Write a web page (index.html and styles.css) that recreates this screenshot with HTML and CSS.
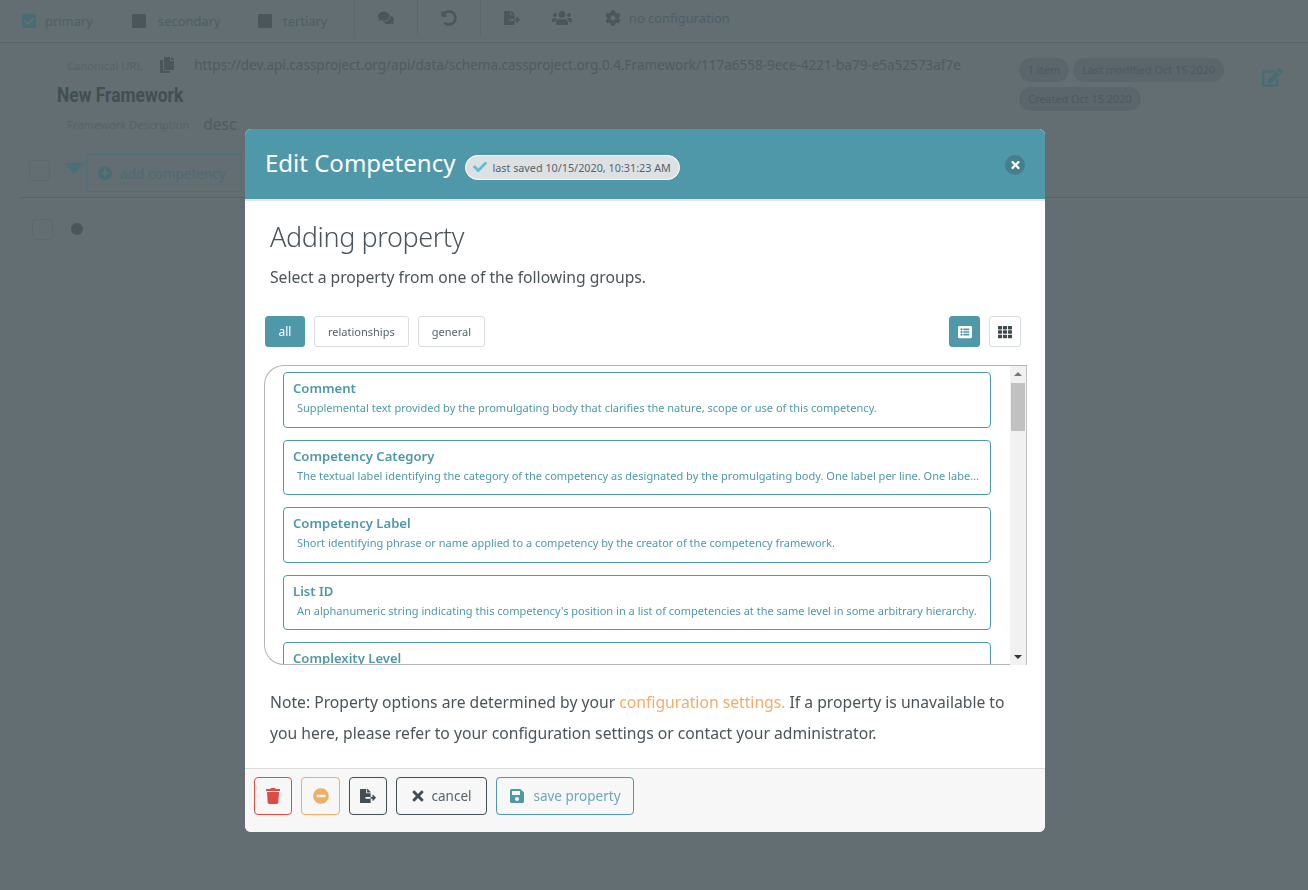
FILE: index.html
```html
<!DOCTYPE html>
<html lang="en">
<head>
    <meta charset="UTF-8">
    <title>Edit Competency</title>
    <link rel="stylesheet" href="styles.css">
</head>
<body>
    <svg class="defs" xmlns="http://www.w3.org/2000/svg">
        <symbol id="i-check-square" viewBox="0 0 448 512"><path d="M400 480H48c-26.51 0-48-21.49-48-48V80c0-26.51 21.49-48 48-48h352c26.51 0 48 21.49 48 48v352c0 26.51-21.49 48-48 48zm-204.686-98.059l184-184c6.248-6.248 6.248-16.379 0-22.627l-22.627-22.627c-6.248-6.248-16.379-6.249-22.628 0L184 302.745l-69.059-69.059c-6.248-6.248-16.379-6.248-22.628 0L69.686 256.313c-6.248 6.248-6.248 16.379 0 22.627l104 104c6.249 6.25 16.379 6.25 22.628.001z"/></symbol>
        <symbol id="i-square" viewBox="0 0 448 512"><path d="M400 32H48C21.5 32 0 53.5 0 80v352c0 26.5 21.5 48 48 48h352c26.5 0 48-21.5 48-48V80c0-26.5-21.5-48-48-48z"/></symbol>
        <symbol id="i-comments" viewBox="0 0 576 512"><path d="M416 192c0-88.4-93.1-160-208-160S0 103.6 0 192c0 34.3 14.1 65.9 38 92-13.4 30.2-35.5 54.2-35.8 54.5-2.2 2.3-2.8 5.7-1.5 8.7S4.8 352 8 352c36.6 0 66.9-12.3 88.7-25 32.2 15.7 70.3 25 111.3 25 114.9 0 208-71.6 208-160zm122 220c23.9-26 38-57.7 38-92 0-66.9-53.5-124.2-129.3-148.1.9 6.6 1.3 13.3 1.3 20.1 0 105.9-107.7 192-240 192-10.8 0-21.3-.8-31.7-1.9C207.8 439.6 281.8 480 368 480c41 0 79.1-9.2 111.3-25 21.8 12.7 52.1 25 88.7 25 3.2 0 6.1-1.9 7.3-4.8 1.3-2.9.7-6.3-1.5-8.7-.3-.3-22.4-24.2-35.8-54.5z"/></symbol>
        <symbol id="i-undo" viewBox="0 0 512 512"><path d="M255.545 8c-66.269.119-126.438 26.233-170.86 68.685L48.971 40.971C33.851 25.851 8 36.559 8 57.941V192c0 13.255 10.745 24 24 24h134.059c21.382 0 32.09-25.851 16.971-40.971l-41.75-41.75c30.864-28.899 70.801-44.907 113.23-45.273 92.398-.798 170.283 73.977 169.484 169.442C423.236 348.009 349.816 424 256 424c-41.127 0-79.997-14.678-110.63-41.556-4.743-4.161-11.906-3.908-16.368.553L89.34 422.659c-4.872 4.872-4.631 12.815.482 17.433C133.798 479.813 192.074 504 256 504c136.966 0 247.999-111.033 248-247.998C504.001 119.193 392.354 7.755 255.545 8z"/></symbol>
        <symbol id="i-export" viewBox="0 0 576 512"><path d="M384 121.9c0-6.3-2.5-12.4-7-16.9L279.1 7c-4.5-4.5-10.6-7-17-7H256v128h128zM571 308l-95.7-96.4c-10.1-10.1-27.4-3-27.4 11.3V288h-64v64h64v65.2c0 14.3 17.3 21.4 27.4 11.3L571 332c6.6-6.6 6.6-17.4 0-24zm-379 28v-32c0-8.8 7.2-16 16-16h176V160H248c-13.2 0-24-10.8-24-24V0H24C10.7 0 0 10.7 0 24v464c0 13.3 10.7 24 24 24h336c13.3 0 24-10.7 24-24V352H208c-8.8 0-16-7.2-16-16z"/></symbol>
        <symbol id="i-users" viewBox="0 0 640 512"><path d="M96 224c35.3 0 64-28.7 64-64s-28.7-64-64-64-64 28.7-64 64 28.7 64 64 64zm448 0c35.3 0 64-28.7 64-64s-28.7-64-64-64-64 28.7-64 64 28.7 64 64 64zm32 32h-64c-17.6 0-33.5 7.1-45.1 18.6 40.3 22.1 68.9 62 75.1 109.4h66c17.7 0 32-14.3 32-32v-32c0-35.3-28.7-64-64-64zm-256 0c61.9 0 112-50.1 112-112S381.9 32 320 32 208 82.1 208 144s50.1 112 112 112zm76.8 32h-8.3c-20.8 10-43.9 16-68.5 16s-47.6-6-68.5-16h-8.3C179.6 288 128 339.6 128 403.2V432c0 26.5 21.5 48 48 48h288c26.5 0 48-21.5 48-48v-28.8c0-63.6-51.6-115.2-115.2-115.2zm-223.7-13.4C161.5 263.1 145.6 256 128 256H64c-35.3 0-64 28.7-64 64v32c0 17.7 14.3 32 32 32h65.9c6.3-47.4 34.9-87.3 75.2-109.4z"/></symbol>
        <symbol id="i-cog" viewBox="0 0 512 512"><path d="M487.4 315.7l-42.6-24.6c4.3-23.2 4.3-47 0-70.2l42.6-24.6c4.9-2.8 7.1-8.6 5.5-14-11.1-35.6-30-67.8-54.7-94.6-3.8-4.1-10-5.1-14.8-2.3L380.8 110c-17.9-15.4-38.5-27.3-60.8-35.1V25.8c0-5.6-3.9-10.5-9.4-11.7-36.7-8.2-74.3-7.8-109.2 0-5.5 1.2-9.4 6.1-9.4 11.7V75c-22.2 7.9-42.8 19.8-60.8 35.1L88.7 85.5c-4.9-2.8-11-1.9-14.8 2.3-24.7 26.7-43.6 58.9-54.7 94.6-1.7 5.4.6 11.2 5.5 14L67.3 221c-4.3 23.2-4.3 47 0 70.2l-42.6 24.6c-4.9 2.8-7.1 8.6-5.5 14 11.1 35.6 30 67.8 54.7 94.6 3.8 4.1 10 5.1 14.8 2.3l42.6-24.6c17.9 15.4 38.5 27.3 60.8 35.1v49.2c0 5.6 3.9 10.5 9.4 11.7 36.7 8.2 74.3 7.8 109.2 0 5.5-1.2 9.4-6.1 9.4-11.7v-49.2c22.2-7.9 42.8-19.8 60.8-35.1l42.6 24.6c4.9 2.8 11 1.9 14.8-2.3 24.7-26.7 43.6-58.9 54.7-94.6 1.5-5.5-.7-11.3-5.6-14.1zM256 336c-44.1 0-80-35.9-80-80s35.9-80 80-80 80 35.9 80 80-35.9 80-80 80z"/></symbol>
        <symbol id="i-copy" viewBox="0 0 448 512"><path d="M320 448v40c0 13.255-10.745 24-24 24H24c-13.255 0-24-10.745-24-24V120c0-13.255 10.745-24 24-24h72v296c0 30.879 25.121 56 56 56h168zm0-344V0H152c-13.255 0-24 10.745-24 24v368c0 13.255 10.745 24 24 24h272c13.255 0 24-10.745 24-24V128H344c-13.2 0-24-10.8-24-24zm120.971-31.029L375.029 7.029A24 24 0 0 0 358.059 0H352v96h96v-6.059a24 24 0 0 0-7.029-16.97z"/></symbol>
        <symbol id="i-edit" viewBox="0 0 576 512"><path d="M402.6 83.2l90.2 90.2c3.8 3.8 3.8 10 0 13.8L274.4 405.6l-92.8 10.3c-12.4 1.4-22.9-9.1-21.5-21.5l10.3-92.8L388.8 83.2c3.8-3.8 10-3.8 13.8 0zm162-22.9l-48.8-48.8c-15.2-15.2-39.9-15.2-55.2 0l-35.4 35.4c-3.8 3.8-3.8 10 0 13.8l90.2 90.2c3.8 3.8 10 3.8 13.8 0l35.4-35.4c15.2-15.3 15.2-40 0-55.2zM384 346.2V448H64V128h229.8c3.2 0 6.2-1.3 8.5-3.5l40-40c7.6-7.6 2.2-20.5-8.5-20.5H48C21.5 64 0 85.5 0 112v352c0 26.5 21.5 48 48 48h352c26.5 0 48-21.5 48-48V306.2c0-10.7-12.9-16-20.5-8.5l-40 40c-2.2 2.3-3.5 5.3-3.5 8.5z"/></symbol>
        <symbol id="i-plus-circle" viewBox="0 0 512 512"><path d="M256 8C119 8 8 119 8 256s111 248 248 248 248-111 248-248S393 8 256 8zm144 276c0 6.6-5.4 12-12 12h-92v92c0 6.6-5.4 12-12 12h-56c-6.6 0-12-5.4-12-12v-92h-92c-6.6 0-12-5.4-12-12v-56c0-6.6 5.4-12 12-12h92v-92c0-6.6 5.4-12 12-12h56c6.6 0 12 5.4 12 12v92h92c6.6 0 12 5.4 12 12v56z"/></symbol>
        <symbol id="i-minus-circle" viewBox="0 0 512 512"><path d="M256 8C119 8 8 119 8 256s111 248 248 248 248-111 248-248S393 8 256 8zM124 296c-6.6 0-12-5.4-12-12v-56c0-6.6 5.4-12 12-12h264c6.6 0 12 5.4 12 12v56c0 6.6-5.4 12-12 12H124z"/></symbol>
        <symbol id="i-check" viewBox="0 0 512 512"><path d="M173.898 439.404l-166.4-166.4c-9.997-9.997-9.997-26.206 0-36.204l36.203-36.204c9.997-9.998 26.207-9.998 36.204 0L192 312.69 432.095 72.596c9.997-9.997 26.207-9.997 36.204 0l36.203 36.204c9.997 9.997 9.997 26.206 0 36.204l-294.4 294.401c-9.998 9.997-26.207 9.997-36.204-.001z"/></symbol>
        <symbol id="i-times" viewBox="0 0 352 512"><path d="M242.72 256l100.07-100.07c12.28-12.28 12.28-32.19 0-44.48l-22.24-22.24c-12.28-12.28-32.19-12.28-44.48 0L176 189.28 75.93 89.21c-12.28-12.28-32.19-12.28-44.48 0L9.21 111.45c-12.28 12.28-12.28 32.19 0 44.48L109.28 256 9.21 356.07c-12.28 12.28-12.28 32.19 0 44.48l22.24 22.24c12.28 12.28 32.2 12.28 44.48 0L176 322.72l100.07 100.07c12.28 12.28 32.2 12.28 44.48 0l22.24-22.24c12.28-12.28 12.28-32.19 0-44.48L242.72 256z"/></symbol>
        <symbol id="i-trash" viewBox="0 0 448 512"><path d="M432 32H312l-9.4-18.7A24 24 0 0 0 281.1 0H166.8a23.72 23.72 0 0 0-21.4 13.3L136 32H16A16 16 0 0 0 0 48v32a16 16 0 0 0 16 16h416a16 16 0 0 0 16-16V48a16 16 0 0 0-16-16zM53.2 467a48 48 0 0 0 47.9 45h245.8a48 48 0 0 0 47.9-45L416 128H32z"/></symbol>
        <symbol id="i-save" viewBox="0 0 448 512"><path d="M433.941 129.941l-83.882-83.882A48 48 0 0 0 316.118 32H48C21.49 32 0 53.49 0 80v352c0 26.51 21.49 48 48 48h352c26.51 0 48-21.49 48-48V163.882a48 48 0 0 0-14.059-33.941zM224 416c-35.346 0-64-28.654-64-64 0-35.346 28.654-64 64-64s64 28.654 64 64c0 35.346-28.654 64-64 64zm96-304.52V212c0 6.627-5.373 12-12 12H76c-6.627 0-12-5.373-12-12V108c0-6.627 5.373-12 12-12h228.52c3.183 0 6.235 1.264 8.485 3.515l3.48 3.48A11.996 11.996 0 0 1 320 111.48z"/></symbol>
        <symbol id="i-list" viewBox="0 0 512 512"><path d="M464 480H48c-26.51 0-48-21.49-48-48V80c0-26.51 21.49-48 48-48h416c26.51 0 48 21.49 48 48v352c0 26.51-21.49 48-48 48zM128 120c-22.091 0-40 17.909-40 40s17.909 40 40 40 40-17.909 40-40-17.909-40-40-40zm0 96c-22.091 0-40 17.909-40 40s17.909 40 40 40 40-17.909 40-40-17.909-40-40-40zm0 96c-22.091 0-40 17.909-40 40s17.909 40 40 40 40-17.909 40-40-17.909-40-40-40zm288-136v-32c0-6.627-5.373-12-12-12H204c-6.627 0-12 5.373-12 12v32c0 6.627 5.373 12 12 12h200c6.627 0 12-5.373 12-12zm0 96v-32c0-6.627-5.373-12-12-12H204c-6.627 0-12 5.373-12 12v32c0 6.627 5.373 12 12 12h200c6.627 0 12-5.373 12-12zm0 96v-32c0-6.627-5.373-12-12-12H204c-6.627 0-12 5.373-12 12v32c0 6.627 5.373 12 12 12h200c6.627 0 12-5.373 12-12z"/></symbol>
        <symbol id="i-th" viewBox="0 0 512 512"><path d="M149.333 56v80c0 13.255-10.745 24-24 24H24c-13.255 0-24-10.745-24-24V56c0-13.255 10.745-24 24-24h101.333c13.255 0 24 10.745 24 24zm181.334 240v-80c0-13.255-10.745-24-24-24H205.333c-13.255 0-24 10.745-24 24v80c0 13.255 10.745 24 24 24h101.333c13.256 0 24.001-10.745 24.001-24zm32-240v80c0 13.255 10.745 24 24 24H488c13.255 0 24-10.745 24-24V56c0-13.255-10.745-24-24-24H386.667c-13.255 0-24 10.745-24 24zm-32 80V56c0-13.255-10.745-24-24-24H205.333c-13.255 0-24 10.745-24 24v80c0 13.255 10.745 24 24 24h101.333c13.256 0 24.001-10.745 24.001-24zm-205.334 56H24c-13.255 0-24 10.745-24 24v80c0 13.255 10.745 24 24 24h101.333c13.255 0 24-10.745 24-24v-80c0-13.255-10.745-24-24-24zM0 376v80c0 13.255 10.745 24 24 24h101.333c13.255 0 24-10.745 24-24v-80c0-13.255-10.745-24-24-24H24c-13.255 0-24 10.745-24 24zm386.667-56H488c13.255 0 24-10.745 24-24v-80c0-13.255-10.745-24-24-24H386.667c-13.255 0-24 10.745-24 24v80c0 13.255 10.745 24 24 24zm0 160H488c13.255 0 24-10.745 24-24v-80c0-13.255-10.745-24-24-24H386.667c-13.255 0-24 10.745-24 24v80c0 13.255 10.745 24 24 24zM181.333 376v80c0 13.255 10.745 24 24 24h101.333c13.255 0 24-10.745 24-24v-80c0-13.255-10.745-24-24-24H205.333c-13.255 0-24 10.745-24 24z"/></symbol>
    </svg>

    <!-- pagina de fondo, ya atenuada -->
    <div class="page">
        <div class="topbar">
            <div class="view-item view-primary"><svg class="ico teal"><use href="#i-check-square"/></svg><span>primary</span></div>
            <div class="view-item view-secondary"><svg class="ico dark"><use href="#i-square"/></svg><span>secondary</span></div>
            <div class="view-item view-tertiary"><svg class="ico dark"><use href="#i-square"/></svg><span>tertiary</span></div>
            <div class="bar-cell bar-comments"><svg class="ico dark"><use href="#i-comments"/></svg></div>
            <div class="bar-cell bar-undo"><svg class="ico dark"><use href="#i-undo"/></svg></div>
            <div class="bar-tools">
                <svg class="ico dark tool-export"><use href="#i-export"/></svg>
                <svg class="ico dark tool-users"><use href="#i-users"/></svg>
                <svg class="ico dark tool-cog"><use href="#i-cog"/></svg>
                <span>no configuration</span>
            </div>
        </div>

        <div class="fw-head">
            <div class="fw-info">
                <div class="fw-url">
                    <span class="fw-label">Canonical URL</span>
                    <svg class="ico dark copy-ico"><use href="#i-copy"/></svg>
                    <span class="url-text">https://dev.api.cassproject.org/api/data/schema.cassproject.org.0.4.Framework/117a6558-9ece-4221-ba79-e5a52573af7e</span>
                </div>
                <div class="fw-name">New Framework</div>
                <div class="fw-desc">
                    <span class="fw-label">Framework Description</span>
                    <span class="desc-text">desc</span>
                </div>
            </div>
            <div class="fw-tags">
                <span class="tag">1 item</span>
                <span class="tag">Last modified Oct 15 2020</span>
                <span class="tag">Created Oct 15 2020</span>
            </div>
            <svg class="ico teal fw-edit"><use href="#i-edit"/></svg>
        </div>

        <div class="comp-bar">
            <span class="box"></span>
            <span class="caret"></span>
            <div class="add-btn"><svg class="ico teal"><use href="#i-plus-circle"/></svg><span>add competency</span></div>
        </div>
        <div class="comp-row">
            <span class="box"></span>
            <span class="dot"></span>
        </div>
    </div>

    <!-- modal -->
    <div class="overlay">
        <div class="modal">
            <div class="modal-head">
                <h2>Edit Competency</h2>
                <span class="saved"><svg class="ico"><use href="#i-check"/></svg>last saved 10/15/2020, 10:31:23 AM</span>
                <span class="close"><svg class="ico"><use href="#i-times"/></svg></span>
            </div>
            <div class="modal-body">
                <h3>Adding property</h3>
                <p class="intro">Select a property from one of the following groups.</p>

                <div class="filters">
                    <span class="btn-f active">all</span>
                    <span class="btn-f">relationships</span>
                    <span class="btn-f">general</span>
                    <span class="btn-view active first-view"><svg class="ico"><use href="#i-list"/></svg></span>
                    <span class="btn-view"><svg class="ico"><use href="#i-th"/></svg></span>
                </div>

                <div class="prop-box">
                    <div class="prop-list">
                        <div class="prop">
                            <div class="prop-title">Comment</div>
                            <div class="prop-text">Supplemental text provided by the promulgating body that clarifies the nature, scope or use of this competency.</div>
                        </div>
                        <div class="prop">
                            <div class="prop-title">Competency Category</div>
                            <div class="prop-text">The textual label identifying the category of the competency as designated by the promulgating body. One label per line. One label per line. One label per line.</div>
                        </div>
                        <div class="prop">
                            <div class="prop-title">Competency Label</div>
                            <div class="prop-text">Short identifying phrase or name applied to a competency by the creator of the competency framework.</div>
                        </div>
                        <div class="prop">
                            <div class="prop-title">List ID</div>
                            <div class="prop-text">An alphanumeric string indicating this competency's position in a list of competencies at the same level in some arbitrary hierarchy.</div>
                        </div>
                        <div class="prop">
                            <div class="prop-title">Complexity Level</div>
                            <div class="prop-text">The expected performance level of a learner or professional as defined by the promulgating body.</div>
                        </div>
                    </div>
                    <div class="scroll">
                        <span class="arrow arrow-up"></span>
                        <div class="scroll-track"><div class="scroll-thumb"></div></div>
                        <span class="arrow arrow-down"></span>
                    </div>
                </div>

                <p class="note">Note: Property options are determined by your <span class="orange">configuration settings.</span> If a property is unavailable to you here, please refer to your configuration settings or contact your administrator.</p>
            </div>
            <div class="modal-foot">
                <span class="btn-a btn-red"><svg class="ico"><use href="#i-trash"/></svg></span>
                <span class="btn-a btn-orange"><svg class="ico"><use href="#i-minus-circle"/></svg></span>
                <span class="btn-a btn-dark"><svg class="ico"><use href="#i-export"/></svg></span>
                <span class="btn-a btn-dark btn-cancel"><svg class="ico"><use href="#i-times"/></svg><span>cancel</span></span>
                <span class="btn-a btn-teal"><svg class="ico"><use href="#i-save"/></svg><span>save property</span></span>
            </div>
        </div>
    </div>
</body>
</html>
```

FILE: styles.css
```css
/* Base */
* {
    box-sizing: border-box;
}

html, body {
    height: 100%;
}

body {
    margin: 0;
    overflow: hidden;
    background-color: #626e72;
    color: #4a5459;
    font-family: "Noto Sans", "Open Sans", sans-serif;
    font-size: 14px;
}

.defs {
    display: none;
}

.ico {
    display: block;
    width: 16px;
    height: 16px;
    fill: currentColor;
    flex: none;
}

.teal {
    color: #476c76;
}

.dark {
    color: #4b565b;
}

/* Pagina de fondo */
.topbar {
    display: flex;
    align-items: center;
    height: 43px;
    padding-left: 21px;
    border-bottom: 1px solid #55636a;
    font-size: 12.9px;
    color: #4e5e65;
}

.view-item {
    display: flex;
    align-items: center;
    gap: 8px;
}

.view-primary {
    width: 110px;
}

.view-secondary {
    width: 126px;
    gap: 11px;
}

.view-tertiary {
    width: 97px;
    gap: 10px;
}

.bar-cell {
    display: flex;
    align-items: center;
    justify-content: center;
    width: 63px;
    height: 37px;
    margin-top: -6px;
    border-left: 1px solid #5a676c;
}

.bar-tools {
    display: flex;
    align-items: center;
    height: 37px;
    margin-top: -6px;
    padding-left: 23px;
    border-left: 1px solid #5a676c;
}

.tool-users {
    width: 20px;
    margin-left: 32px;
}

.tool-cog {
    margin-left: 33px;
    margin-right: 8px;
}

.fw-head {
    display: flex;
    height: 111px;
    padding: 0 25px 0 57px;
}

.fw-info {
    width: 962px;
}

.fw-url {
    display: flex;
    align-items: center;
    height: 20px;
    margin-top: 12px;
    padding-left: 10px;
}

.fw-label {
    color: #566267;
    font-size: 11.2px;
}

.copy-ico {
    margin-left: 18px;
    margin-right: 20px;
    width: 14px;
}

.url-text {
    font-size: 13.5px;
    white-space: nowrap;
    color: #4f5b60;
}

.fw-name {
    margin-top: 8px;
    font-family: "Roboto", sans-serif;
    font-size: 20px;
    line-height: 24px;
    font-weight: 700;
    color: #434e52;
    transform: scaleX(0.87);
    transform-origin: left center;
}

.fw-desc {
    display: flex;
    align-items: center;
    height: 20px;
    margin-top: 7px;
    padding-left: 10px;
}

.desc-text {
    margin-left: 14px;
    font-size: 15.5px;
    color: #4f5b60;
}

.fw-tags {
    display: flex;
    flex-wrap: wrap;
    align-content: flex-start;
    gap: 5px 4px;
    width: 222px;
    padding-top: 15px;
}

.tag {
    padding: 0 9px;
    height: 24px;
    line-height: 24px;
    border-radius: 12px;
    background-color: #5a666b;
    color: #4d595e;
    font-size: 10.9px;
    white-space: nowrap;
}

.fw-edit {
    width: 21px;
    height: 19px;
    margin-top: 25px;
    margin-left: 21px;
}

.comp-bar {
    display: flex;
    align-items: center;
    height: 44px;
    margin-left: 20px;
    padding-left: 9px;
    padding-bottom: 5px;
    border-bottom: 1px solid #55636a;
}

.comp-bar .box {
    margin-top: -6px;
}

.box {
    display: block;
    width: 21px;
    height: 21px;
    border: 1px solid #5b686c;
    border-radius: 4px;
}

.caret {
    width: 0;
    height: 0;
    margin-left: 14px;
    margin-right: 2px;
    margin-top: -10px;
    border-left: 10px solid transparent;
    border-right: 10px solid transparent;
    border-top: 11px solid #4a6f79;
}

.add-btn {
    display: flex;
    align-items: center;
    gap: 8px;
    width: 156px;
    height: 38px;
    padding-left: 11px;
    border: 1px solid #4f6f78;
    border-radius: 3px;
    font-size: 13.6px;
    color: #4f6a73;
}

.add-btn .ico {
    width: 14px;
    height: 14px;
}

.comp-row {
    display: flex;
    align-items: center;
    gap: 18px;
    height: 22px;
    margin-top: 20px;
    padding-left: 32px;
}

.dot {
    width: 12px;
    height: 12px;
    border-radius: 50%;
    background-color: #4b565b;
}

/* Capa sobre la pagina */
.overlay {
    position: fixed;
    top: 0;
    left: 0;
    right: 0;
    bottom: 0;
    padding: 129px 0 0 245px;
}

.modal {
    display: flex;
    flex-direction: column;
    width: 800px;
    height: 703px;
    border-radius: 6px;
    overflow: hidden;
    background-color: #ffffff;
}

.modal-head {
    display: flex;
    align-items: center;
    flex: none;
    height: 72px;
    padding: 0 20px;
    background-color: #4f98a9;
    border-bottom: 2px solid #e2e5e6;
}

.modal-head h2 {
    margin: -4px 0 0;
    color: #ffffff;
    font-size: 24px;
    font-weight: 400;
    white-space: nowrap;
}

.saved {
    display: flex;
    align-items: center;
    gap: 5px;
    height: 25px;
    margin-left: 10px;
    margin-top: 6px;
    padding: 0 8px 0 7px;
    border: 1px solid #ffffff;
    border-radius: 13px;
    background-color: #dee1e3;
    font-size: 10.8px;
    color: #55646a;
    white-space: nowrap;
}

.saved .ico {
    width: 14px;
    height: 14px;
    color: #5ebfd8;
}

.close {
    display: flex;
    align-items: center;
    justify-content: center;
    width: 20px;
    height: 20px;
    margin-left: auto;
    margin-top: 2px;
    border-radius: 50%;
    background-color: #457f8f;
    color: #ffffff;
}

.close .ico {
    width: 9px;
    height: 12px;
}

.modal-body {
    flex: 1;
    padding: 0 20px;
}

.modal-body h3 {
    margin: 15px 0 0 5px;
    font-size: 27px;
    line-height: 42px;
    font-weight: 300;
    letter-spacing: -0.4px;
    color: #4a5459;
}

.intro {
    margin: 8px 0 0 5px;
    font-size: 15.7px;
    line-height: 22px;
}

.filters {
    display: flex;
    align-items: center;
    gap: 9px;
    margin-top: 28px;
}

.btn-f, .btn-view {
    display: flex;
    align-items: center;
    justify-content: center;
    height: 31px;
    padding: 0 13px;
    border: 1px solid #d9dcdd;
    border-radius: 3px;
    font-size: 11px;
    color: #55646a;
}

.btn-f.active, .btn-view.active {
    background-color: #4f98a9;
    border-color: #4f98a9;
    color: #ffffff;
}

.btn-f.active {
    width: 40px;
    font-size: 12px;
}

.btn-view {
    width: 32px;
    padding: 0;
    color: #3f4a4f;
}

.btn-view .ico {
    width: 14px;
    height: 14px;
}

.first-view {
    width: 31px;
    margin-left: auto;
}

.filters .btn-view:last-child {
    margin-right: 4px;
}

.prop-box {
    position: relative;
    height: 300px;
    width: 763px;
    margin-top: 18px;
    margin-left: -1px;
    border: 1px solid #b4b4b4;
    border-right: none;
    border-radius: 20px 0 0 20px;
}

.prop-list {
    display: flex;
    flex-direction: column;
    gap: 12px;
    width: 708px;
    height: 298px;
    margin-left: 18px;
    padding-top: 6px;
    overflow: hidden;
}

.prop {
    flex: none;
    height: 55.5px;
    padding: 5px 9px;
    border: 1px solid #4f98a9;
    border-radius: 4px;
    color: #4f98a9;
}

.prop-title {
    font-size: 13.1px;
    line-height: 20px;
    font-weight: 600;
}

.prop-text {
    padding-left: 4px;
    font-size: 11.04px;
    line-height: 20px;
    white-space: nowrap;
    overflow: hidden;
    text-overflow: ellipsis;
}

/* Barra de desplazamiento dibujada a mano */
.scroll {
    position: absolute;
    top: 0;
    right: 0;
    bottom: -1px;
    display: flex;
    flex-direction: column;
    align-items: center;
    width: 17px;
    background-color: #f1f1f1;
    border-right: 1px solid #c4c4c4;
}

.arrow {
    width: 0;
    height: 0;
    margin: 6px 0;
    border-left: 4px solid transparent;
    border-right: 4px solid transparent;
}

.arrow-up {
    border-bottom: 4px solid #777777;
}

.arrow-down {
    border-top: 4px solid #333333;
}

.scroll-track {
    flex: 1;
    width: 100%;
}

.scroll-thumb {
    width: 14px;
    height: 48px;
    margin: 1px auto 0;
    background-color: #c1c1c1;
}

.note {
    margin: 22px 0 0 5px;
    font-size: 15.7px;
    line-height: 31px;
}

.orange {
    color: #f0ad6b;
}

.modal-foot {
    display: flex;
    align-items: center;
    gap: 9px;
    flex: none;
    height: 64px;
    padding: 0 9px 10px;
    background-color: #f7f7f7;
    border-top: 1px solid #dcdcdc;
}

.btn-a {
    display: flex;
    align-items: center;
    justify-content: center;
    gap: 8px;
    height: 38px;
    width: 38px;
    border: 1px solid;
    border-radius: 4px;
    font-size: 13.5px;
}

.btn-a span {
    margin-top: 1px;
}

.btn-red {
    color: #dc4c46;
}

.btn-orange {
    color: #f0ad63;
    width: 39px;
}

.btn-dark {
    color: #414e54;
}

.btn-cancel {
    width: 91px;
}

.btn-cancel .ico {
    width: 12px;
}

.btn-cancel span {
    color: #55646a;
}

.btn-teal {
    width: 138px;
    color: #4f98a9;
}

.btn-teal span {
    color: #6da8b7;
}
```
